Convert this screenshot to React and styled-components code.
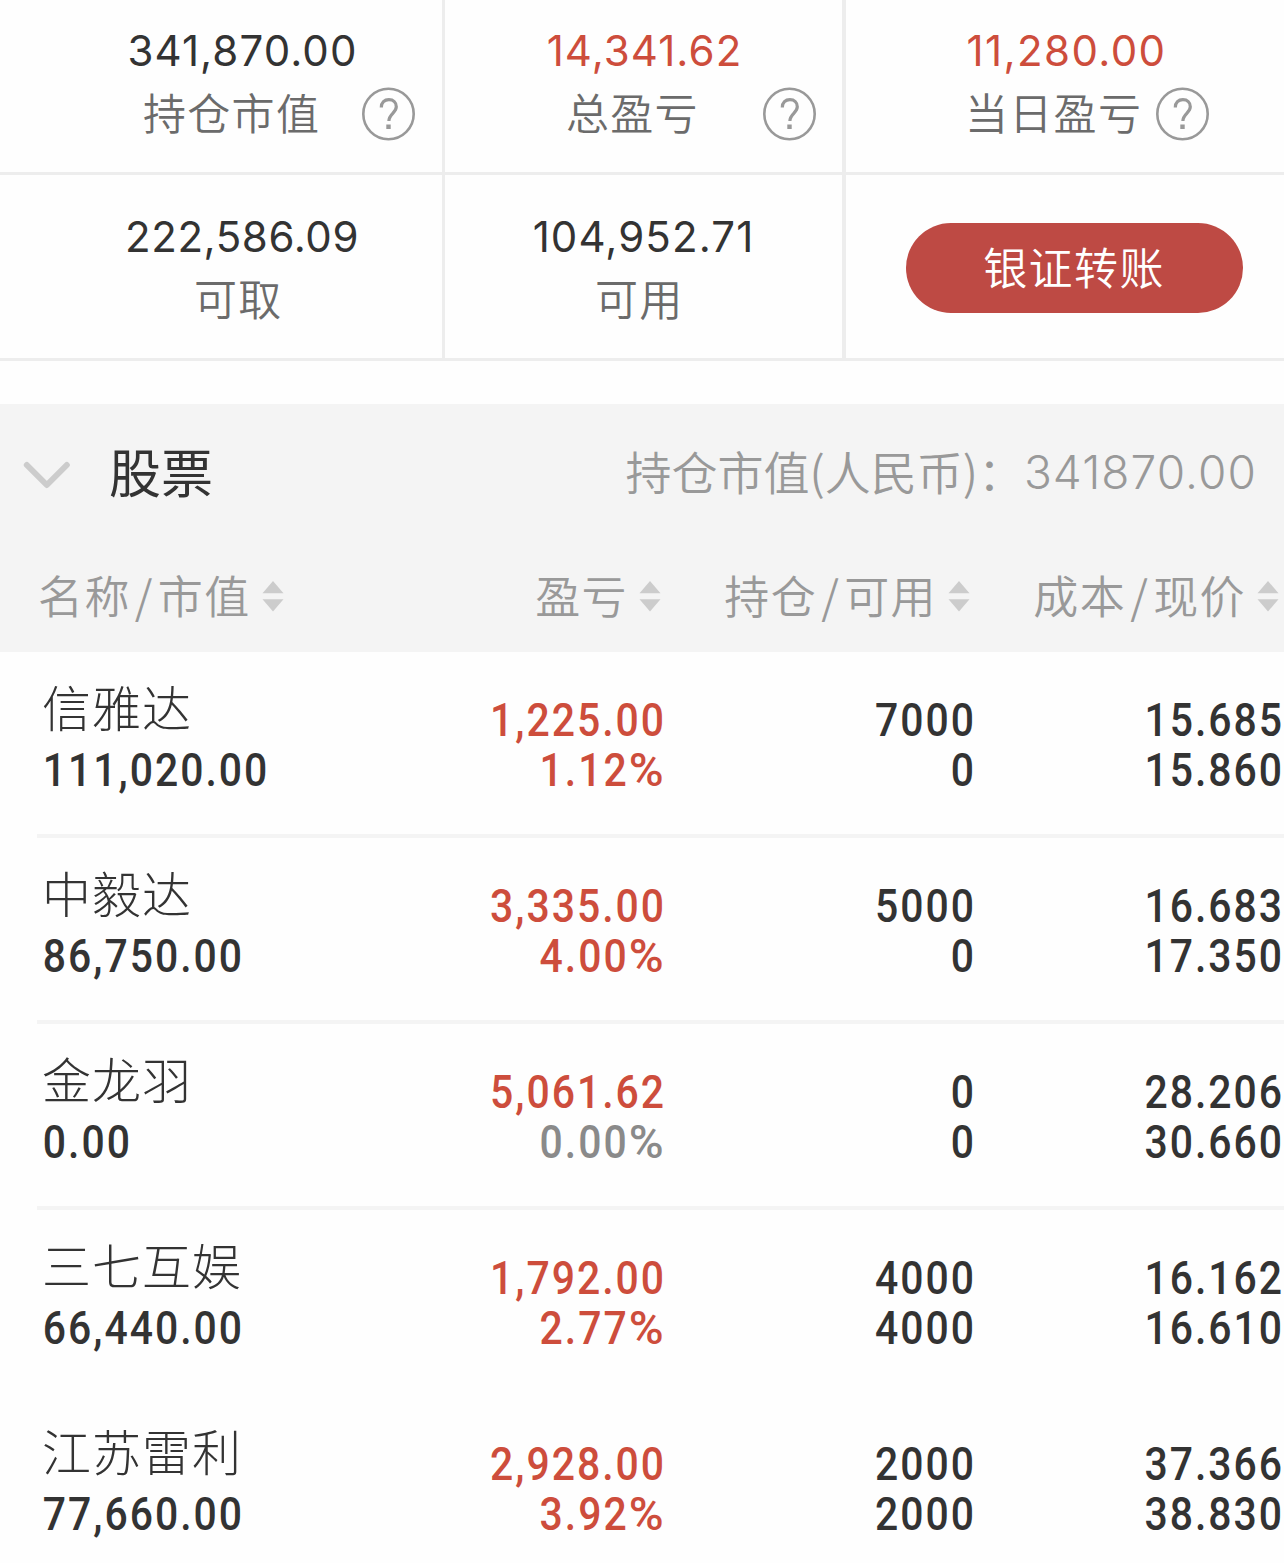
import React from 'react'
import styled, { createGlobalStyle } from 'styled-components'

const RED = '#cd4d3c'
const DARK = '#333333'

const GlobalStyle = createGlobalStyle`
  * {
    box-sizing: border-box;
  }

  body {
    margin: 0;
    background: #fefefe;
    font-family: 'Noto Sans CJK SC', sans-serif;
  }
`

const PageContainer = styled.div`
  width: 1284px;
  height: 1563px;

  overflow: hidden;
`

const SummaryGrid = styled.div`
  display: grid;
  grid-template-columns: 445px 401px 438px;
  grid-template-rows: 175px 186px;
`

const SummaryCell = styled.div`
  padding-top: ${(props) => props.$top}px;

  border-right: ${(props) => props.$divider || 0}px solid #ededed;
  border-bottom: 3px solid #ededed;
`

const SummaryValue = styled.p`
  height: 50px;
  margin: 0;
  padding-left: ${(props) => props.$indent || 0}px;

  color: ${(props) => props.$color || DARK};
  font-family: Inter, sans-serif;
  font-size: 42px;
  font-weight: 400;
  line-height: 50px;
  letter-spacing: ${(props) => props.$tracking || 1.1}px;
  text-align: center;
  white-space: nowrap;
`

const LabelRow = styled.div`
  height: 54px;
  margin-top: 11px;
  padding-left: ${(props) => props.$start}px;

  display: flex;
  align-items: center;
  gap: ${(props) => props.$gap || 0}px;
`

const SummaryLabel = styled.span`
  padding-bottom: 7px;

  color: #6b6b6b;
  font-size: 43px;
  font-weight: 350;
  line-height: 54px;
  letter-spacing: 1.3px;
  white-space: nowrap;
`

const TransferButton = styled.button`
  width: 337px;
  height: 90px;
  margin-left: 60px;
  padding: 0 1px 5px 0;

  border: none;
  border-radius: 45px;
  background: #be4a44;

  color: #ffffff;
  font-family: inherit;
  font-size: 44px;
  font-weight: 350;
  letter-spacing: 1.4px;
`

const SectionHeader = styled.div`
  height: 248px;
  margin-top: 43px;

  background: #f4f4f4;
`

const SectionTitleRow = styled.div`
  height: 138px;
  padding: 0 27px 0 23px;

  display: flex;
  align-items: center;
`

const SectionTitle = styled.h2`
  margin: 0 0 0 38px;
  padding-bottom: 4px;

  color: ${DARK};
  font-size: 52px;
  font-weight: 400;
  line-height: 60px;
`

const SectionTotal = styled.div`
  margin-left: auto;

  display: flex;
  align-items: center;

  color: #999999;
  line-height: 60px;
  white-space: nowrap;
`

const TotalLabel = styled.span`
  padding-bottom: 6px;

  font-size: 46px;
  font-weight: 350;
`

const TotalNumber = styled.span`
  padding-bottom: 2px;

  font-family: Inter, sans-serif;
  font-size: 46px;
  font-weight: 350;
  letter-spacing: 1.1px;
`

const ColumnHeader = styled.div`
  height: 110px;
  padding-left: 38px;

  display: grid;
  grid-template-columns: 360px 263px 309px 309px;
`

const ColumnTitle = styled.div`
  height: 110px;

  display: flex;
  justify-content: ${(props) => (props.$left ? 'flex-start' : 'flex-end')};
  align-items: flex-start;

  color: #999999;
  font-size: 45px;
  font-weight: 350;
  line-height: 106px;
  letter-spacing: 1.4px;
  white-space: nowrap;
`

const Slash = styled.span`
  margin: 0 4px;
`

const SortSvg = styled.svg`
  margin: 38px 0 0 11px;
`

const StockRow = styled.div`
  height: 186px;
  margin-left: 37px;
  padding-top: 27px;

  display: grid;
  grid-template-columns: 361px 268px 310px 308px;

  border-bottom: 4px solid ${(props) => (props.$last ? 'transparent' : '#f4f4f4')};
`

const StockInfo = styled.div`
  padding-left: 5px;
`

const StockName = styled.p`
  height: 66px;
  margin: 0;

  color: ${DARK};
  font-size: 49px;
  font-weight: 300;
  line-height: 54px;
  letter-spacing: 1px;
`

const NumberCell = styled.div`
  padding-top: 16px;

  text-align: right;
`

// narrow digits, squeezed towards the side they are aligned to
const Figure = styled.p`
  height: 50px;
  margin: 0;
  padding-left: ${(props) => (props.$left ? 1 : 0)}px;

  color: ${(props) => props.$color || DARK};
  font-family: Roboto, sans-serif;
  font-size: 47px;
  font-weight: 500;
  line-height: 50px;
  letter-spacing: 2.3px;
  white-space: nowrap;

  transform: scaleX(0.87);
  transform-origin: ${(props) => (props.$left ? 'left' : 'right')} center;
`

const Percent = styled.span`
  margin-left: 6px;

  display: inline-block;

  transform: scaleX(1.16);
  transform-origin: right center;
`

const stocks = [
  { name: '信雅达', value: '111,020.00', profit: '1,225.00', rate: '1.12', held: '7000', usable: '0', cost: '15.685', price: '15.860' },
  { name: '中毅达', value: '86,750.00', profit: '3,335.00', rate: '4.00', held: '5000', usable: '0', cost: '16.683', price: '17.350' },
  { name: '金龙羽', value: '0.00', profit: '5,061.62', rate: '0.00', held: '0', usable: '0', cost: '28.206', price: '30.660' },
  { name: '三七互娱', value: '66,440.00', profit: '1,792.00', rate: '2.77', held: '4000', usable: '4000', cost: '16.162', price: '16.610' },
  { name: '江苏雷利', value: '77,660.00', profit: '2,928.00', rate: '3.92', held: '2000', usable: '2000', cost: '37.366', price: '38.830' },
]

const columns = [['名称', '市值'], ['盈亏'], ['持仓', '可用'], ['成本', '现价']]

function HelpIcon() {
  return (
    <svg width="54" height="54" viewBox="0 0 54 54" fill="none" stroke="#999999">
      <circle cx="26.5" cy="27" r="25.2" strokeWidth="2.6" />
      <path d="M19.3 20.5c0-5 3.2-7.8 7.6-7.8s7.4 2.8 7.4 7.1c0 6-7.4 7.2-7.4 14.2" strokeWidth="3.2" />
      <path d="M26.5 37.5v4.5" strokeWidth="4.4" />
    </svg>
  )
}

function SortIcon() {
  return (
    <SortSvg width="22" height="32" viewBox="0 0 22 32" fill="#cccccc">
      <path d="M11 1l10.5 12.3h-21z" />
      <path d="M11 31.5l10.5-12.3h-21z" />
    </SortSvg>
  )
}

function ChevronIcon() {
  return (
    <svg width="48" height="34" viewBox="0 0 48 34" fill="none" stroke="#cccccc">
      <path d="M3.8 9l20 20 20-20" strokeWidth="6" strokeLinecap="round" strokeLinejoin="round" />
    </svg>
  )
}

function App() {
  return (
    <PageContainer>
      <GlobalStyle />
      <SummaryGrid>
        <SummaryCell $top={26} $divider={3}>
          <SummaryValue $indent={43}>341,870.00</SummaryValue>
          <LabelRow $start={143} $gap={42}>
            <SummaryLabel>持仓市值</SummaryLabel>
            <HelpIcon />
          </LabelRow>
        </SummaryCell>
        <SummaryCell $top={26} $divider={4}>
          <SummaryValue $color={RED} $indent={2}>14,341.62</SummaryValue>
          <LabelRow $start={121} $gap={64}>
            <SummaryLabel>总盈亏</SummaryLabel>
            <HelpIcon />
          </LabelRow>
        </SummaryCell>
        <SummaryCell $top={26}>
          <SummaryValue $color={RED} $indent={3} $tracking={1.4}>11,280.00</SummaryValue>
          <LabelRow $start={119} $gap={14}>
            <SummaryLabel>当日盈亏</SummaryLabel>
            <HelpIcon />
          </LabelRow>
        </SummaryCell>
        <SummaryCell $top={37} $divider={3}>
          <SummaryValue $indent={42} $tracking={0.6}>222,586.09</SummaryValue>
          <LabelRow $start={194}>
            <SummaryLabel>可取</SummaryLabel>
          </LabelRow>
        </SummaryCell>
        <SummaryCell $top={37} $divider={4}>
          <SummaryValue>104,952.71</SummaryValue>
          <LabelRow $start={150}>
            <SummaryLabel>可用</SummaryLabel>
          </LabelRow>
        </SummaryCell>
        <SummaryCell $top={48}>
          <TransferButton>银证转账</TransferButton>
        </SummaryCell>
      </SummaryGrid>

      <SectionHeader>
        <SectionTitleRow>
          <ChevronIcon />
          <SectionTitle>股票</SectionTitle>
          <SectionTotal>
            <TotalLabel>持仓市值(人民币)：</TotalLabel>
            <TotalNumber>341870.00</TotalNumber>
          </SectionTotal>
        </SectionTitleRow>
        <ColumnHeader>
          {columns.map(function (parts, index) {
            return (
              <ColumnTitle key={parts[0]} $left={index === 0}>
                {parts[0]}
                {parts[1] && <Slash>/</Slash>}
                {parts[1]}
                <SortIcon />
              </ColumnTitle>
            )
          })}
        </ColumnHeader>
      </SectionHeader>

      {stocks.map(function (stock, index) {
        return (
          <StockRow key={stock.name} $last={index >= 3}>
            <StockInfo>
              <StockName>{stock.name}</StockName>
              <Figure $left>{stock.value}</Figure>
            </StockInfo>
            <NumberCell>
              <Figure $color={RED}>{stock.profit}</Figure>
              <Figure $color={stock.rate === '0.00' ? '#8a8a8a' : RED}>
                {stock.rate}<Percent>%</Percent>
              </Figure>
            </NumberCell>
            <NumberCell>
              <Figure>{stock.held}</Figure>
              <Figure>{stock.usable}</Figure>
            </NumberCell>
            <NumberCell>
              <Figure>{stock.cost}</Figure>
              <Figure>{stock.price}</Figure>
            </NumberCell>
          </StockRow>
        )
      })}
    </PageContainer>
  )
}

export default App
